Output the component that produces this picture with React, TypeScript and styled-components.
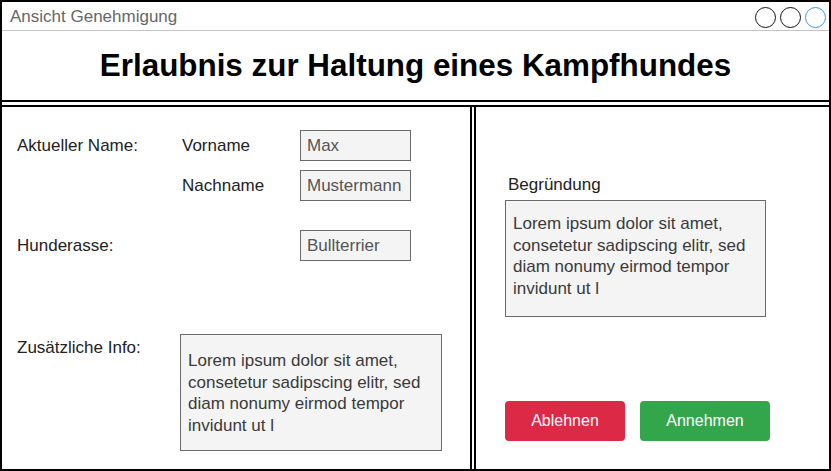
import * as React from "react";
import styled, { createGlobalStyle } from "styled-components";

const GlobalStyle = createGlobalStyle`
  html, body {
    margin: 0;
    padding: 0;
    background: #ffffff;
  }
  * {
    box-sizing: border-box;
  }
`;

const Window = styled.div`
  display: flex;
  flex-direction: column;
  width: 831px;
  height: 471px;
  border: 2px solid #000;
  background: #fff;
  font-family: "Liberation Sans", Arial, sans-serif;
  color: #1f1f1f;
  overflow: hidden;
`;

const TitleBar = styled.div`
  display: flex;
  align-items: center;
  justify-content: space-between;
  height: 29px;
  padding: 1px 3px 0 8px;
  border-bottom: 1px solid #c4c4c4;
  flex-shrink: 0;
`;

const WindowTitle = styled.span`
  font-size: 17px;
  color: #666;
`;

const Dots = styled.div`
  display: flex;
  gap: 4px;
  margin-top: 1px;
`;

const Dot = styled.span<{ $active?: boolean }>`
  width: 21px;
  height: 21px;
  border-radius: 50%;
  border: 1.5px solid ${(p) => (p.$active ? "#3b97f0" : "#111")};
`;

const Heading = styled.header`
  display: flex;
  align-items: center;
  justify-content: center;
  height: 71px;
  border-bottom: 2px solid #000;
  flex-shrink: 0;

  h1 {
    margin: 0;
    font-size: 31.4px;
    font-weight: 700;
    color: #000;
  }
`;

const Body = styled.main`
  display: flex;
  flex: 1;
  gap: 2px;
  margin-top: 3px;
  border-top: 2px solid #000;
  min-height: 0;
`;

const LeftPanel = styled.section`
  width: 470px;
  border-right: 2px solid #000;
  padding: 23px 0 0 15px;
  display: flex;
  flex-direction: column;
`;

const FormRow = styled.div<{ $gap?: number; $top?: boolean }>`
  display: grid;
  grid-template-columns: 163px 120px 1fr;
  align-items: ${(p) => (p.$top ? "start" : "center")};
  margin-top: ${(p) => p.$gap ?? 0}px;
`;

const Label = styled.span<{ $indent?: boolean; $offset?: number }>`
  font-size: 17px;
  color: #222;
  padding-left: ${(p) => (p.$indent ? "2px" : "0")};
  margin-top: ${(p) => p.$offset ?? 0}px;
`;

const Field = styled.div`
  height: 31px;
  width: 111px;
  border: 1px solid #6a6a6a;
  background: #f4f4f4;
  padding: 0 6px;
  display: flex;
  align-items: center;
  font-size: 17px;
  color: #555;
  white-space: nowrap;
  overflow: hidden;
`;

const TextBox = styled.div<{ $width: number; $padTop: number }>`
  width: ${(p) => p.$width}px;
  height: 117px;
  border: 1px solid #6a6a6a;
  background: #f4f4f4;
  padding: ${(p) => p.$padTop}px 8px 0 7px;
  font-size: 17px;
  line-height: 21.5px;
  color: #3a3a3a;
`;

const InfoBox = styled(TextBox)`
  grid-column: 2 / 4;
`;

const RightPanel = styled.section`
  flex: 1;
  border-left: 2px solid #000;
  display: flex;
  flex-direction: column;
  align-items: flex-start;
  padding: 68px 0 0 29px;
`;

const ReasonLabel = styled.span`
  font-size: 17px;
  color: #222;
  margin: 0 0 5px 3px;
`;

const Actions = styled.div`
  display: flex;
  gap: 15px;
  margin-top: 84px;
`;

const Button = styled.button<{ $tone: "red" | "green"; $width: number }>`
  width: ${(p) => p.$width}px;
  height: 40px;
  border: none;
  border-radius: 4px;
  background: ${(p) => (p.$tone === "red" ? "#dc2945" : "#33a64c")};
  color: #fff;
  font-family: "Liberation Sans", Arial, sans-serif;
  font-size: 16px;
  cursor: pointer;
`;

const lorem = "Lorem ipsum dolor sit amet, consetetur sadipscing elitr, sed diam nonumy eirmod tempor invidunt ut l";

export default function App() {
  return (
    <>
      <GlobalStyle />
      <Window>
        <TitleBar>
          <WindowTitle>Ansicht Genehmigung</WindowTitle>
          <Dots>
            <Dot />
            <Dot />
            <Dot $active />
          </Dots>
        </TitleBar>
        <Heading>
          <h1>Erlaubnis zur Haltung eines Kampfhundes</h1>
        </Heading>
        <Body>
          <LeftPanel>
            <FormRow>
              <Label>Aktueller Name:</Label>
              <Label $indent>Vorname</Label>
              <Field>Max</Field>
            </FormRow>
            <FormRow $gap={9}>
              <span />
              <Label $indent>Nachname</Label>
              <Field>Mustermann</Field>
            </FormRow>
            <FormRow $gap={29}>
              <Label>Hunderasse:</Label>
              <span />
              <Field>Bullterrier</Field>
            </FormRow>
            <FormRow $gap={73} $top>
              <Label $offset={4}>Zusätzliche Info:</Label>
              <InfoBox $width={262} $padTop={15}>{lorem}</InfoBox>
            </FormRow>
          </LeftPanel>
          <RightPanel>
            <ReasonLabel>Begründung</ReasonLabel>
            <TextBox $width={261} $padTop={12}>{lorem}</TextBox>
            <Actions>
              <Button $tone="red" $width={120}>Ablehnen</Button>
              <Button $tone="green" $width={130}>Annehmen</Button>
            </Actions>
          </RightPanel>
        </Body>
      </Window>
    </>
  );
}
